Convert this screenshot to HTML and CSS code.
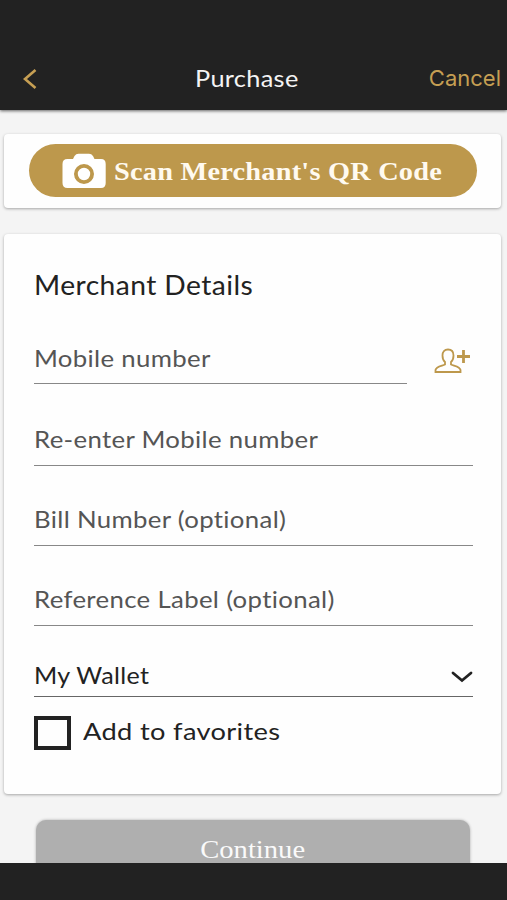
FILE: index.html
```html
<!DOCTYPE html>
<html lang="en">
<head>
<meta charset="utf-8">
<title>Purchase</title>
<link rel="stylesheet" href="styles.css">
</head>
<body>
<div class="app">
  <header class="topbar">
    <svg class="back" width="18" height="22" viewBox="0 0 18 22"><path d="M14.500 2 4 11l10.500 9"/></svg>
    <h1 class="topbar-title"><span class="wide t-purchase">Purchase</span></h1>
    <span class="cancel">Cancel</span>
  </header>
  <main class="content">
    <section class="card scan-card">
      <div class="scan-button">
        <svg class="camera" width="44" height="36" viewBox="0 0 44 36"><path fill-rule="evenodd" d="M5.500 6H11l1.500-3Q14 .8 16.500.8h10.500q2.500 0 4 2.200L32.500 6H39Q43.700 6 43.700 11v19q0 5-4.700 5H5.500Q.5 35 .5 30V11q0-5 5-5ZM22 11a10 10 0 1 0 0 20 10 10 0 0 0 0-20Zm0 3.800a6.200 6.200 0 1 1 0 12.400 6.200 6.200 0 0 1 0-12.400Z"/></svg>
        <span class="scan-label wide">Scan Merchant's QR Code</span>
      </div>
    </section>
    <section class="card details">
      <h2 class="details-title"><span class="wide t-title">Merchant Details</span></h2>
      <div class="mobile-row">
        <div class="field"><span class="wide">Mobile number</span></div>
        <svg class="add-contact" width="38" height="28" viewBox="0 0 38 28"><path class="person" d="M11 17.500v-2.500C9 13.500 8.500 11 8.500 8.500c0-4 2-6 5.500-6s5.500 2 5.500 6c0 2.500-.5 5-2.500 6.500v2.500c3.500 1.500 9 2 9.500 5.500v2H1.500v-2c.5-3.500 6-4 9.500-5.500Z"/><path class="plus" d="M29.500 3v13M23 9.500h13"/></svg>
      </div>
      <div class="field field-first"><span class="wide">Re-enter Mobile number</span></div>
      <div class="field"><span class="wide">Bill Number (optional)</span></div>
      <div class="field"><span class="wide">Reference Label (optional)</span></div>
      <div class="field select"><span class="wide t-wallet">My Wallet</span>
        <svg class="chevron" width="22" height="14" viewBox="0 0 22 14"><path d="M2 3 11 10.500 20 3"/></svg>
      </div>
      <div class="favorite"><span class="checkbox"></span><span class="wide t-favorite">Add to favorites</span></div>
    </section>
    <div class="continue"><span class="wide t-continue">Continue</span></div>
  </main>
  <footer class="bottombar"></footer>
</div>
</body>
</html>
```
FILE: styles.css
```css
* { box-sizing: border-box; }
body { margin: 0; background: #f4f4f4; font-family: Lato, "Liberation Sans", sans-serif; color: #222; }
.app { height: 900px; display: flex; flex-direction: column; overflow: hidden; }
.wide { display: inline-block; transform: scaleX(1.12); transform-origin: left center; }
.topbar { height: 110px; flex: none; background: #222; padding: 48px 6px 0 21px; display: grid; grid-template-columns: 100px 1fr 100px; align-items: center; box-shadow: 0 1px 3px rgba(0,0,0,.6); }
.topbar-title { margin: 0; color: #f4f4f4; font-size: 23px; font-weight: 400; text-align: center; letter-spacing: .3px; line-height: 58px; padding: 0 26px 2px 0; }
.t-purchase { transform: scaleX(1.1); transform-origin: 64% center; }
.back { fill: none; stroke: #c69f53; stroke-width: 2.600; }
.cancel { color: #c69f53; font-family: Inter, sans-serif; font-size: 22px; text-align: right; line-height: 58px; padding-bottom: 2px; }
.content { flex: 1; min-height: 0; overflow: hidden; padding: 24px 6px 0 4px; }
.card { background: #fefefe; border-radius: 4px; box-shadow: 0 1px 3px rgba(0,0,0,.32); }
.scan-card { height: 74px; padding: 10px 24px 0 25px; }
.scan-button { height: 53px; border-radius: 27px; background: #bd984c; display: flex; align-items: center; padding-left: 33px; gap: 8px; }
.camera { flex: none; fill: #fff; }
.scan-label { color: #fffaf0; font: bold 26px "Liberation Serif", serif; letter-spacing: .2px; white-space: nowrap; transform: scaleX(1.09); margin-top: 2px; }
.details { height: 560px; margin-top: 26px; padding: 0 28px 0 30px; }
.details-title { margin: 0; height: 86px; padding-top: 35px; font-size: 26px; font-weight: 400; line-height: 32px; letter-spacing: .4px; }
.t-title { transform: scaleX(1.085); }
.mobile-row { display: flex; justify-content: space-between; height: 64px; }
.mobile-row .field { width: 373px; height: 64px; padding-bottom: 10px; }
.field { height: 80px; display: flex; align-items: flex-end; border-bottom: 1.500px solid #888; padding-bottom: 11px; font-size: 23px; line-height: 30px; color: #555; letter-spacing: .3px; white-space: nowrap; }
.field-first { height: 82px; }
.add-contact { margin: 27px 1px 0 0; fill: none; stroke: #bd984c; }
.person { stroke-width: 1.800; }
.plus { stroke-width: 2.800; }
.select { height: 71px; padding-bottom: 6px; color: #222; border-color: #666; justify-content: space-between; }
.t-wallet { transform: scaleX(1.09); }
.chevron { fill: none; stroke: #222; stroke-width: 2.800; margin-bottom: 6px; stroke-linecap: round; }
.favorite { display: flex; align-items: center; gap: 12px; margin-top: 19px; font-size: 24px; letter-spacing: .3px; }
.t-favorite { margin-top: -5px; transform: scaleX(1.135); }
.checkbox { width: 37px; height: 34px; border: 4px solid #222; }
.continue { height: 60px; margin: 26px 31px 0 32px; border-radius: 10px; background: #afafaf; box-shadow: 0 0 3px rgba(0,0,0,.3); color: #fafafa; text-align: center; font: 26px/59px "Liberation Serif", serif; }
.t-continue { transform: scaleX(1.1); transform-origin: center; }
.bottombar { height: 37px; flex: none; background: #222; }
```
